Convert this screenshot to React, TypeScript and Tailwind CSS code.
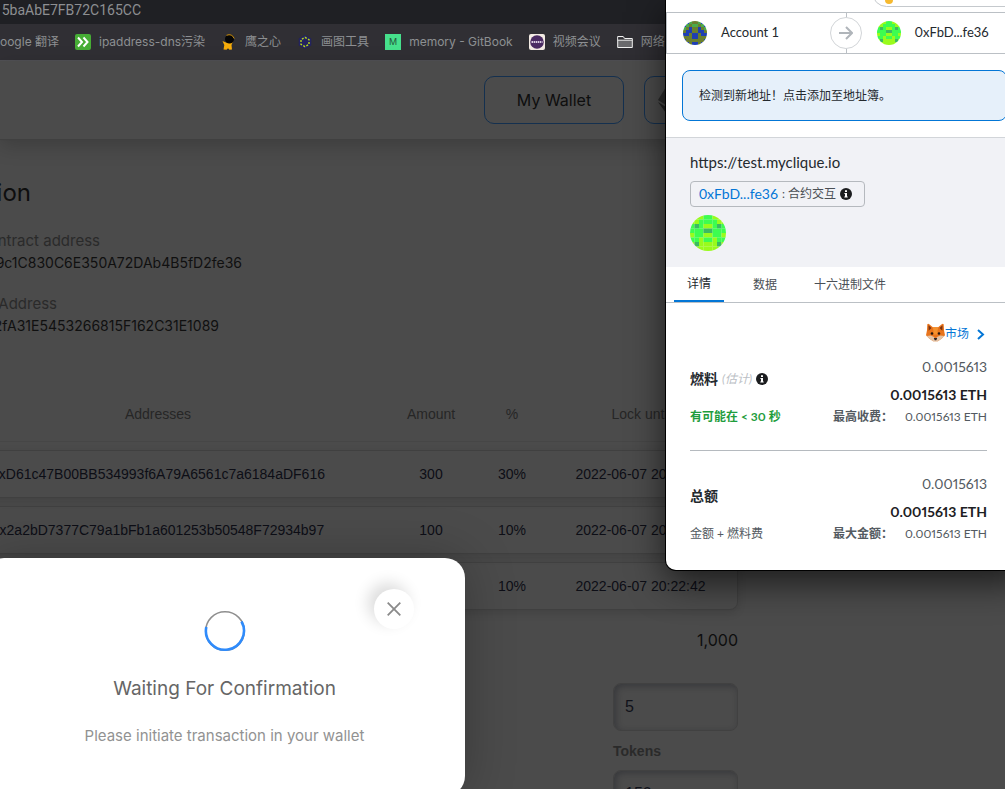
import React from "react";

const CELL_COLORS: Record<string, string> = {
  L: "#99fb1c",
  G: "#3dfd50",
  T: "#3cb963",
  B: "#1f3fb4",
  O: "#6a7f2f",
  E: "#4aaa4c",
};

const GREEN = ["LLLGGLLL", "LLGGGGLL", "GTGLLGTG", "GGGTTGGG", "LGGLLGGL", "GGLGGLGG", "LTLLLLTL", "LLLLLLLL"];
const BLUE = ["BBEOOEBB", "BEOEEOEB", "EOBOOBOE", "OBBOOBBO", "BBOBBOBB", "OOOBBOOO", "BOOOOOOB", "OBOBBOBO"];

function Identicon({ cells, size, id }: { cells: string[]; size: number; id: string }) {
  return (
    <svg width={size} height={size} viewBox="0 0 8 8" className="shrink-0" aria-hidden="true">
      <clipPath id={id}>
        <circle cx="4" cy="4" r="4" />
      </clipPath>
      <g clipPath={`url(#${id})`}>
        {cells.map((row, y) =>
          row.split("").map((c, x) => <rect key={`${x}-${y}`} x={x} y={y} width="1.02" height="1.02" fill={CELL_COLORS[c]} />)
        )}
      </g>
    </svg>
  );
}

function InfoIcon() {
  return (
    <svg width="12" height="12" viewBox="0 0 12 12" className="shrink-0" aria-hidden="true">
      <circle cx="6" cy="6" r="6" fill="#1b1d1f" />
      <path d="M5 2.200h2v1.700H5zM4.400 4.900H7v3.500h.7v1.200H4.300V8.400H5V6.100h-.6z" fill="#fff" />
    </svg>
  );
}

function Fox() {
  return (
    <svg width="19" height="19" viewBox="0 0 20 20" className="mb-1" aria-hidden="true">
      <path d="M1.400 1.200Q2.200.2 3.400 1.200L7.200 4.400h5.600l3.800-3.200Q17.800.2 18.600 1.200L19 8l1 5-3.400 3.400L12.500 19.200h-5l-4.100-2.800L0 13l1-5z" fill="#e8741c" />
      <path d="M2.600 2.400 5.800 5.200 2.800 8.200zM17.400 2.400l-3.200 2.800 3 3z" fill="#7a3212" />
      <path d="M7.200 4.400h5.600L11.600 12H8.400z" fill="#f5922e" />
      <path d="m.6 13.600 4.400-.4 3.400 1.600L10 17l1.600-2.200 3.400-1.600 4.400.4-2.800 2.800-4.100 2.800h-5l-4.100-2.800z" fill="#e3c3a6" />
      <circle cx="6.300" cy="11" r="1.300" fill="#23160f" />
      <circle cx="13.700" cy="11" r="1.300" fill="#23160f" />
      <path d="M8.200 15.800h3.600L10.800 18.200H9.200z" fill="#2a2020" />
    </svg>
  );
}

function Bookmark({ label, children }: { label: string; children?: React.ReactNode }) {
  return (
    <a href="#" className="flex shrink-0 items-center gap-2">
      {children}
      <span>{label}</span>
    </a>
  );
}

function BrowserBar() {
  return (
    <div className="text-[#8d8f92]">
      <div className="flex h-6 items-center bg-[#1f2024] pb-1">
        <div className="flex w-[141px] justify-end overflow-hidden font-[Roboto,sans-serif] text-sm whitespace-nowrap">5baAbE7FB72C165CC</div>
      </div>
      <nav className="flex h-[37px] items-center gap-4 border-b border-[#515155] bg-[#302f34] font-[Inter,'Noto_Sans_CJK_SC',sans-serif] text-xs whitespace-nowrap">
        <div className="flex w-[59px] justify-end overflow-hidden">
          <Bookmark label="oogle 翻译" />
        </div>
        <Bookmark label="ipaddress-dns污染">
          <svg width="16" height="16" viewBox="0 0 16 16" aria-hidden="true">
            <rect width="16" height="16" rx="2" fill="#46ad35" />
            <path d="m3 3.500 4 4.500-4 4.500M8.500 3.500l4 4.500-4 4.500" fill="none" stroke="#fff" strokeWidth="2" />
          </svg>
        </Bookmark>
        <Bookmark label="鹰之心">
          <svg width="16" height="16" viewBox="0 0 16 16" aria-hidden="true">
            <path d="M1.500 7 5 8.500 12 7.500 10.500 11l.5 4.500-2.500.3-1.500-1.500-1.500 1.500-3-.3.8-4.500z" fill="#f6ac0a" />
            <circle cx="8.500" cy="5" r="4.500" fill="#050505" />
            <path d="M5.500 1.300Q11-.8 13.200 4.500" fill="none" stroke="#d39510" />
          </svg>
        </Bookmark>
        <Bookmark label="画图工具">
          <svg width="16" height="16" viewBox="0 0 16 16" aria-hidden="true">
            <path d="m8 1 6.300 3.500v7L8 15l-6.300-3.500v-7z" fill="#23235f" />
            <path d="m8 3.300 4 2.300v4.800l-4 2.300-4-2.300V5.600z" fill="none" stroke="#b6d81c" strokeWidth="1.400" strokeDasharray="2 1.500" />
          </svg>
        </Bookmark>
        <Bookmark label="memory - GitBook">
          <span className="flex size-4 items-center justify-center bg-[#46e08c] text-[9px] text-[#25543b]">M</span>
        </Bookmark>
        <Bookmark label="视频会议">
          <svg width="16" height="16" viewBox="0 0 16 16" aria-hidden="true">
            <rect width="16" height="16" rx="2" fill="#f3ebe4" />
            <circle cx="8" cy="8" r="6.800" fill="#4a2b62" />
            <path d="M2.500 8h11" stroke="#d9cbe0" strokeWidth="2" strokeDasharray="1.500 .6" />
          </svg>
        </Bookmark>
        <Bookmark label="网络">
          <svg width="16" height="16" viewBox="0 0 16 16" aria-hidden="true">
            <path d="M.7 13.500v-11h5.500l1.500 2h7.600v9z" fill="#6a6a6d" stroke="#f2f2f2" />
            <path d="M1.200 3.200h4.600l1.300 2H14.800v1H1.200z" fill="#302f34" />
            <path d="M.7 6.200h14.600" stroke="#f2f2f2" />
          </svg>
        </Bookmark>
      </nav>
    </div>
  );
}

const ROWS = [
  ["0xD61c47B00BB534993f6A79A6561c7a6184aDF616", "300", "30%", "2022-06-07 20:22:42"],
  ["0x2a2bD7377C79a1bFb1a601253b50548F72934b97", "100", "10%", "2022-06-07 20:22:42"],
  ["", "100", "10%", "2022-06-07 20:22:42"],
];

function AddressLine({ label, value, labelClass, valueClass }: { label: string; value: string; labelClass: string; valueClass: string }) {
  return (
    <div className="whitespace-nowrap">
      <div className={`flex h-[22px] items-center justify-end overflow-hidden text-[15px] text-[#2a2a2a] ${labelClass}`}>{label}</div>
      <div className={`flex h-[22px] items-center justify-end overflow-hidden text-sm text-[#101010] ${valueClass}`}>{value}</div>
    </div>
  );
}

function Page() {
  return (
    <main className="flex flex-1 flex-col">
      <header className="flex h-[78px] shrink-0 gap-5 pt-[15px] pl-[484px] shadow-[0_1px_1px_#404040,0_6px_20px_rgba(0,0,0,0.2)]">
        <button className="h-12 w-[140px] rounded-[10px] border border-[#14304f] text-base text-[#0e0e0e]">My Wallet</button>
        <button aria-label="Ethereum network" className="flex h-12 w-[140px] items-center rounded-[10px] border border-[#14304f] pl-[13px]">
          <svg width="16" height="26" viewBox="0 0 16 26" aria-hidden="true">
            <path d="M8 0v18L0 13z" fill="#2a2a2a" />
            <path d="m8 0 8 13-8 5z" fill="#111" />
            <path d="m0 15 8 5 8-5-8 11z" fill="#222" />
          </svg>
        </button>
      </header>

      <h1 className="mt-9 flex h-9 w-[31px] items-center justify-end overflow-hidden text-2xl text-[#0e0e0e]">ion</h1>
      <div className="mt-[19px] flex flex-col gap-[19px]">
        <AddressLine label="ntract address" value="9c1C830C6E350A72DAb4B5fD2fe36" labelClass="w-[100px]" valueClass="w-[242px]" />
        <AddressLine label="Address" value="2fA31E5453266815F162C31E1089" labelClass="w-[57px]" valueClass="w-[219px]" />
      </div>

      <table className="mt-[41px] -ml-[66px] w-[804px] table-fixed border-separate border-spacing-x-0 border-spacing-y-2 text-center font-['Liberation_Sans',sans-serif] text-sm">
        <colgroup>
          <col />
          <col className="w-[98px]" />
          <col className="w-[64px]" />
          <col className="w-[194px]" />
        </colgroup>
        <thead>
          <tr className="h-14 text-[#262626]">
            {["Addresses", "Amount", "%", "Lock until"].map((h) => (
              <th key={h} className="border-b border-[#464646] font-normal">{h}</th>
            ))}
          </tr>
        </thead>
        <tbody className="text-[#0d0e16]">
          {ROWS.map((r, i) => (
            <tr key={i} className="h-12 rounded-lg shadow-[0_3px_8px_rgba(0,0,0,0.12)]">
              {r.map((c, j) => (
                <td key={j} className="border-y border-[#404040] last:rounded-r-lg last:border-r">{c}</td>
              ))}
            </tr>
          ))}
        </tbody>
      </table>

      <div className="flex w-[738px] flex-col items-end">
        <div className="mt-[6px] flex h-8 items-center text-base text-[#0e0e0e]">1,000</div>
        <div className="mt-[27px] flex w-[125px] flex-col font-['Liberation_Sans',sans-serif]">
          <input aria-label="Percent" defaultValue="5" className="h-12 w-full rounded-lg border border-[#414141] px-[11px] text-base text-[#10121a] shadow-[inset_2px_2px_6px_rgba(20,24,32,0.35)]" />
          <label htmlFor="tokens" className="flex h-[39px] items-center text-sm font-bold text-[#2a2a2a]">Tokens</label>
          <input id="tokens" defaultValue="150" className="h-12 w-full rounded-lg border border-[#414141] px-[11px] text-base text-[#10121a] shadow-[inset_2px_2px_6px_rgba(20,24,32,0.35)]" />
        </div>
      </div>
    </main>
  );
}

function ConfirmationModal() {
  return (
    <section role="dialog" aria-label="Waiting For Confirmation" className="absolute top-[558px] -left-4 flex h-[238px] w-[481px] flex-col items-center rounded-[20px] bg-white shadow-[0_0_50px_rgba(0,0,0,0.25)]">
      <button aria-label="Close" className="absolute top-[31px] right-[51px] flex size-10 items-center justify-center rounded-full bg-white shadow-[-6px_-6px_15px_rgba(0,0,0,0.14)]">
        <svg width="14" height="14" viewBox="0 0 14 14" aria-hidden="true">
          <path d="m.7.7 12.600 12.600M13.300.7.7 13.300" stroke="#8a8a8a" strokeWidth="1.800" />
        </svg>
      </button>
      <svg width="42" height="42" viewBox="0 0 42 42" className="mt-[52px]" fill="none" aria-hidden="true">
        <circle cx="21" cy="21" r="19.300" stroke="#8f8f8f" strokeWidth="1.500" />
        <path d="M37.500 11.500A19 19 0 1 1 2.300 17" stroke="#2f8bfb" strokeWidth="2.600" />
      </svg>
      <h2 className="mt-[21px] text-[19px] leading-8 text-[#666]">Waiting For Confirmation</h2>
      <p className="mt-[17px] text-[15px] leading-7 text-[#929292]">Please initiate transaction in your wallet</p>
    </section>
  );
}

function FeeBlock({ title, note, maxLabel }: { title: React.ReactNode; note: React.ReactNode; maxLabel: string }) {
  return (
    <div className="grid grid-cols-[auto_1fr] text-right text-[#535a61] proportional-nums">
      <div className="row-span-2 flex items-center gap-1 pb-1 text-sm font-bold text-[#24292e]">{title}</div>
      <div className="h-7 text-sm leading-7">0.0015613</div>
      <div className="h-7 text-sm leading-7 font-bold text-[#1d2023]">0.0015613 ETH</div>
      <div className="text-left text-xs leading-4">{note}</div>
      <div className="flex justify-end gap-3 text-xs leading-4">
        <span className="font-bold">{maxLabel}</span>
        <span>0.0015613 ETH</span>
      </div>
    </div>
  );
}

function WalletPopup() {
  return (
    <section aria-label="Wallet" className="absolute top-0 left-[666px] h-[570px] w-[360px] overflow-hidden rounded-b-[10px] bg-white font-[Lato,'Noto_Sans_CJK_SC',sans-serif] text-xs text-[#24292e]">
      <div className="h-3 overflow-hidden pl-[206px]">
        <div className="-mt-[22px] h-[29px] w-48 rounded-full border border-[#c5c9cd] pt-[21px] pl-3">
          <div className="h-1 w-2 rounded-b-full bg-[#f6b92f]" />
        </div>
      </div>
      <div className="grid h-[42px] grid-cols-[1fr_1px_1fr] items-center border border-[#bbc0c5]">
        <div className="flex items-center gap-[14px] pl-4 text-[13px]">
          <Identicon cells={BLUE} size={24} id="from-account" />
          Account 1
        </div>
        <div className="flex h-full w-px items-center justify-center bg-[#bbc0c5]">
          <div className="flex size-8 shrink-0 items-center justify-center rounded-full border border-[#d2d5d8] bg-white">
            <svg width="14" height="14" viewBox="0 0 14 14" fill="none" stroke="#b0b5ba" strokeWidth="2" aria-hidden="true">
              <path d="M0 7h12.500M7 1l6 6-6 6" />
            </svg>
          </div>
        </div>
        <div className="flex items-center gap-[14px] pl-[30px] text-[13px] proportional-nums">
          <Identicon cells={GREEN} size={24} id="to-account" />
          0xFbD...fe36
        </div>
      </div>
      <div className="mt-4 mr-[19px] ml-4 flex h-[51px] items-center rounded-lg border border-[#0376d6] bg-[#e6f0fa] px-4">检测到新地址！点击添加至地址簿。</div>
      <div className="mt-4 flex h-[130px] flex-col items-start border-t border-[#d2d5d9] bg-[#f1f2f6] pt-3 pl-6">
        <div className="text-[15px] leading-6">https://test.myclique.io</div>
        <div className="mt-[7px] flex h-[26px] w-[175px] items-center gap-1 rounded border border-[#b5b9be] pl-2 text-[#4a4f55]">
          <a href="#" className="text-sm text-[#0376d6]">0xFbD...fe36</a>
          <span>: 合约交互</span>
          <InfoIcon />
        </div>
        <div className="mt-2">
          <Identicon cells={GREEN} size={36} id="contract" />
        </div>
      </div>
      <div role="tablist" className="flex h-[36px] border-b border-[#bbc0c5] pl-2 text-[#4a4f55]">
        <button role="tab" aria-selected="true" className="border-b-2 border-[#0376d6] px-[13px] text-[#24292e]">详情</button>
        <button role="tab" aria-selected="false" className="ml-4 px-[13px]">数据</button>
        <button role="tab" aria-selected="false" className="ml-[11px] px-[13px]">十六进制文件</button>
      </div>
      <div className="pr-[39px] pl-6">
        <div className="flex h-[50px] items-center justify-end pt-3 pr-[2px]">
          <a href="#" className="flex items-center text-[#0376d6]">
            <Fox />
            市场
            <svg width="8" height="11" viewBox="0 0 8 11" className="ml-2" fill="none" stroke="#0376d6" strokeWidth="2" aria-hidden="true">
              <path d="m1 1 5 4.500-5 4.500" />
            </svg>
          </a>
        </div>
        <FeeBlock
          title={
            <>
              燃料 <em className="text-xs font-normal text-[#bbc0c5]">(估计)</em>
              <InfoIcon />
            </>
          }
          note={<span className="font-bold text-[#1f9d3d]">有可能在 &lt; 30 秒</span>}
          maxLabel="最高收费："
        />
        <hr className="mt-[25px] mb-[19px] border-[#b5babf]" />
        <FeeBlock title="总额" note="金额 + 燃料费" maxLabel="最大金额：" />
      </div>
    </section>
  );
}

export default function App() {
  return (
    <div className="relative flex h-screen flex-col overflow-hidden bg-[#4b4b4b] font-[Inter,sans-serif]">
      <BrowserBar />
      <Page />
      <ConfirmationModal />
      <div className="absolute top-0 left-[666px] h-[570px] w-[360px] rounded-b-[10px] shadow-[0_0_0_1px_#000,0_12px_36px_rgba(0,0,0,0.65)]" />
      <WalletPopup />
    </div>
  );
}
